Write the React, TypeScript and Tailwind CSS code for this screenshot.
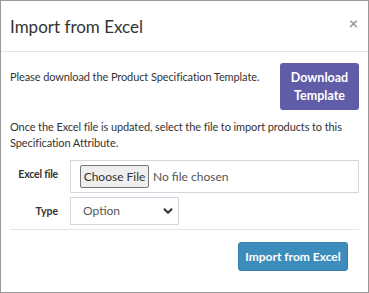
import { ChevronDown } from "lucide-react";

const font = { fontFamily: 'Lato, "Liberation Sans", sans-serif' };

export default function App() {
  return (
    <div
      className="flex h-[293px] w-[369px] flex-col border border-[#999] bg-white text-[#333]"
      style={font}
    >
      <div className="flex h-[51px] shrink-0 items-center justify-between border-b border-[#e5e5e5] pl-[9px] pr-[10px]">
        <h2 className="text-[17px] leading-none">Import from Excel</h2>
        <span className="-mt-[6px] text-[16px] font-bold leading-none text-[#999]">×</span>
      </div>

      <div className="px-[9px]">
        <div className="mt-[11px] flex items-start justify-between">
          <p className="mt-[6px] text-[11px] leading-[16px] tracking-[-0.1px]">
            Please download the Product Specification Template.
          </p>
          <button
            type="button"
            className="h-[47px] w-[79px] rounded-[3px] bg-[#605ca8] text-[12.5px] font-bold leading-[18px] text-white"
          >
            Download
            <br />
            Template
          </button>
        </div>

        <p className="mt-[9px] text-[11px] leading-[16px] tracking-[-0.1px]">
          Once the Excel file is updated, select the file to import products to this
          Specification Attribute.
        </p>

        <div className="mt-[9px] flex items-start">
          <label className="w-[48px] pt-[6px] text-right text-[10.5px] font-bold leading-[16px] tracking-[-0.2px]">
            Excel file
          </label>
          <div className="ml-[12px] flex h-[33px] flex-1 items-center border border-[#d2d6de] pl-[9px] text-[12px] text-[#555]">
            <span className="flex h-[23px] w-[69px] items-center justify-center rounded-[2px] border border-[#767676] bg-[#efefef] text-[#333]">
              Choose File
            </span>
            <span className="ml-[4px]">No file chosen</span>
          </div>
        </div>

        <div className="mt-[4px] flex items-center">
          <label className="w-[48px] text-right text-[10.5px] font-bold leading-[16px]">
            Type
          </label>
          <div className="ml-[12px] flex h-[28px] w-[109px] items-center justify-between border border-[#d2d6de] pl-[12px] pr-[3px] text-[12px] text-[#555]">
            <span>Option</span>
            <ChevronDown className="h-[14px] w-[14px] text-[#333]" strokeWidth={3.5} />
          </div>
        </div>

        <div className="mt-[4px] border-t border-[#e5e5e5]" />

        <div className="mt-[12px] flex justify-end pr-[11px]">
          <button
            type="button"
            className="h-[29px] w-[110px] rounded-[3px] border border-[#367fa9] bg-[#3c8dbc] text-[12px] font-bold text-white"
          >
            Import from Excel
          </button>
        </div>
      </div>
    </div>
  );
}
